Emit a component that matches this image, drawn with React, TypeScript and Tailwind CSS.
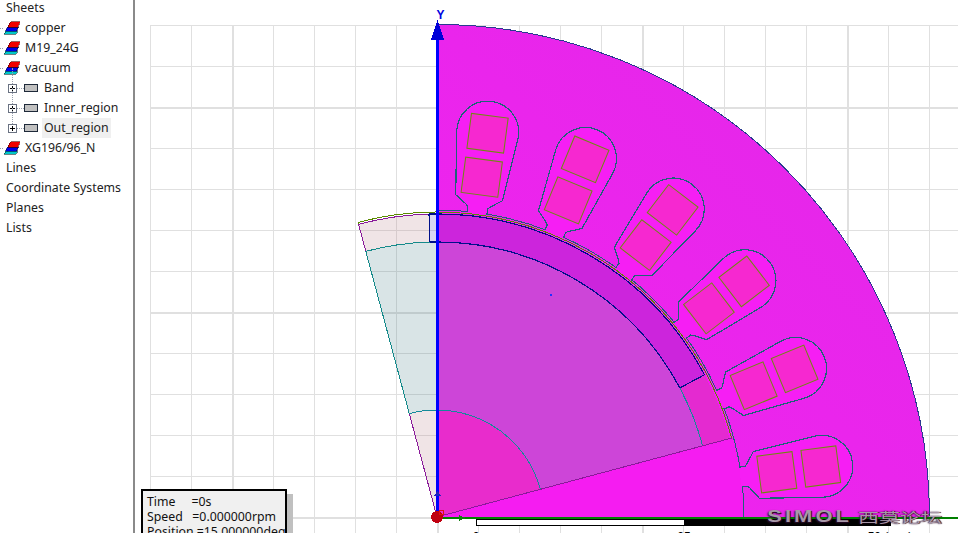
const CX = 437;
const CY = 517;

const pt = (r: number, deg: number) => {
  const a = (deg * Math.PI) / 180;
  return `${(CX + r * Math.cos(a)).toFixed(2)} ${(CY - r * Math.sin(a)).toFixed(2)}`;
};

// arc line from a1 to a2 (counter clockwise on screen)
const arc = (r: number, a1: number, a2: number) => `M${pt(r, a1)} A${r} ${r} 0 0 0 ${pt(r, a2)}`;

const ring = (r1: number, r2: number, a1: number, a2: number) =>
  `M${pt(r2, a1)} A${r2} ${r2} 0 0 0 ${pt(r2, a2)} L${pt(r1, a2)} A${r1} ${r1} 0 0 1 ${pt(r1, a1)} Z`;

const pie = (r: number, a1: number, a2: number) => `M${CX} ${CY} L${pt(r, a1)} A${r} ${r} 0 0 0 ${pt(r, a2)} Z`;

const u = (n: number) => CX + n;
const up = (n: number) => CY - n;

const slotPath = `M${u(306)} ${up(10)} L${u(312)} ${up(10)} L${u(314)} ${up(12)} L${u(322)} ${up(23.5)} L${u(384.6)} ${up(30.8)} A31 31 0 1 1 ${u(384.6)} ${up(-30.8)} L${u(322)} ${up(-23.5)} L${u(314)} ${up(-12)} L${u(312)} ${up(-10)} L${u(306)} ${up(-10)}`;

const slotAngles = [7.5, 22.5, 37.5, 52.5, 67.5, 82.5];

const gridX = Array.from({ length: 20 }, (_, i) => 150 + i * 41);
const gridY = Array.from({ length: 13 }, (_, i) => 25 + i * 41);

const MaterialIcon = () => (
  <svg width="16" height="14" viewBox="0 0 16 14" className="shrink-0" shapeRendering="crispEdges">
    <path d="M0 13 L1.5 9.5 L13.5 9.5 L12 13 Z" fill="#00c8c8" stroke="#0a3030" strokeWidth="0.6" />
    <path d="M1.5 10 L3.5 6 L14.5 6 L12.5 10 Z" fill="#0000e8" stroke="#000040" strokeWidth="0.6" />
    <path d="M3.5 6 L6.5 0.5 L16 0.5 L13.5 6 Z" fill="#f00000" stroke="#500000" strokeWidth="0.6" />
  </svg>
);

const materials = (name: string) => (
  <div className="flex h-5 items-center" key={name}>
    <span className="mr-px h-0 w-[3px] border-t border-dotted border-gray-400" />
    <MaterialIcon />
    <span className="ml-[5px]">{name}</span>
  </div>
);

const objectRow = (name: string, selected = false) => (
  <div className="relative flex h-5 items-center pl-2" key={name}>
    <span className="absolute -top-2.5 left-3 h-5 border-l border-dotted border-gray-400" />
    <span className="relative flex h-[9px] w-[9px] items-center justify-center border border-gray-500 bg-white">
      <span className="absolute h-px w-[5px] bg-black" />
      <span className="absolute h-[5px] w-px bg-black" />
    </span>
    <span className="h-0 w-[7px] border-t border-dotted border-gray-400" />
    <span className="h-2 w-[14px] border border-gray-800 bg-[#c0c0c0]" />
    <span className={`ml-1 px-0.5 leading-5 ${selected ? 'bg-[#f0f0f0]' : ''}`}>{name}</span>
  </div>
);

const plainRow = (name: string) => (
  <div className="flex h-5 items-center pl-1.5" key={name}>
    {name}
  </div>
);

const Sidebar = () => (
  <div className="-mt-0.5 flex h-full w-[133px] shrink-0 flex-col overflow-hidden bg-white font-['Noto_Sans',sans-serif] text-[12.3px] text-[#222]">
    {plainRow('Sheets')}
    {materials('copper')}
    {materials('M19_24G')}
    {materials('vacuum')}
    {objectRow('Band')}
    {objectRow('Inner_region')}
    {objectRow('Out_region', true)}
    {materials('XG196/96_N')}
    {plainRow('Lines')}
    {plainRow('Coordinate Systems')}
    {plainRow('Planes')}
    {plainRow('Lists')}
  </div>
);

const Drawing = () => (
  <svg width="823" height="533" viewBox="135 0 823 533" className="block" shapeRendering="crispEdges">
    <defs>
      <linearGradient id="stator" x1="0" y1="1" x2="1" y2="0">
        <stop offset="0" stopColor="#f222f0" />
        <stop offset="1" stopColor="#e228e8" />
      </linearGradient>
    </defs>

    {/* grid */}
    {gridX.map((x, i) => {
      const major = (i - 2) % 5 === 0;
      return <line key={x} x1={x + (major ? 1 : 0.5)} y1={25} x2={x + (major ? 1 : 0.5)} y2={533} stroke="#e0e0e0" strokeWidth={major ? 2 : 1} />;
    })}
    {gridY.map((y, i) => {
      const major = (i - 2) % 5 === 0;
      return <line key={y} x1={150} y1={y + (major ? 1 : 0.5)} x2={958} y2={y + (major ? 1 : 0.5)} stroke="#e0e0e0" strokeWidth={major ? 2 : 1} />;
    })}

    {/* stator */}
    <path d={ring(300, 492.5, 0, 90)} fill="url(#stator)" />
    <path d={arc(492.5, 0, 90)} fill="none" stroke="#2a3a90" />
    <path d={pie(307, 0, 15)} fill="#f51cf1" />
    <path d={ring(300, 307, 15, 90)} fill="#f51cf1" />
    <path d={arc(307, 0, 90)} fill="none" stroke="#1c6478" />

    {/* slots and coils */}
    {slotAngles.map((a) => (
      <g key={a} transform={`rotate(${-a} ${CX} ${CY})`}>
        <path d={slotPath} fill="#f61ef4" stroke="#1c6478" strokeWidth="1.2" />
        <rect x={u(325)} y={up(18.5)} width={35.5} height={37} fill="#f628d0" stroke="#6f8a10" shapeRendering="auto" />
        <rect x={u(369.5)} y={up(18.5)} width={35.2} height={37} fill="#f628d0" stroke="#6f8a10" shapeRendering="auto" />
      </g>
    ))}

    {/* rotor, right of the axis */}
    <path d={ring(275, 303, 15, 28)} fill="#e42ad0" />
    <path d={ring(275, 303, 28, 90)} fill="#cc25dc" />
    <path d={ring(107, 275, 15, 90)} fill="#cd45d8" />
    <path d={pie(107, 15, 90)} fill="#e82ccc" />

    {/* rotor, left of the axis */}
    <path d={ring(275, 303, 91.5, 105)} fill="rgb(180,120,130)" fillOpacity="0.2" />
    <path d={ring(275, 303, 90, 91.5)} fill="#3030c0" fillOpacity="0.2" />
    <path d={ring(107, 275, 90, 105)} fill="rgb(65,120,130)" fillOpacity="0.2" />
    <path d={pie(107, 90, 105)} fill="rgb(180,120,130)" fillOpacity="0.2" />

    {/* rotor outlines */}
    <path d={arc(305, 15, 105)} fill="none" stroke="#5a8a00" />
    <path d={arc(303, 91.5, 105)} fill="none" stroke="#8a1a9a" />
    <path d={arc(303, 28, 91.5)} fill="none" stroke="#00108a" strokeWidth="1.2" />
    <path d={arc(275, 28, 91.5)} fill="none" stroke="#00108a" strokeWidth="1.2" />
    <path d={arc(275, 15, 28)} fill="none" stroke="#158a9a" />
    <path d={arc(275, 91.5, 105)} fill="none" stroke="#158a8a" />
    <path d={arc(107, 15, 105)} fill="none" stroke="#158a9a" />
    <path d={`M${pt(275, 28)} L${pt(303, 28)}`} stroke="#00108a" strokeWidth="1.2" />
    <path d={`M${pt(275, 91.5)} L${pt(303, 91.5)}`} stroke="#00108a" strokeWidth="1.2" />
    <path d={`M${CX} ${CY} L${pt(305, 15)}`} stroke="#8a1a9a" />
    <path d={`M${CX} ${CY} L${pt(107, 105)}`} stroke="#8a1a9a" />
    <path d={`M${pt(107, 105)} L${pt(275, 105)}`} stroke="#158a8a" />
    <path d={`M${pt(275, 105)} L${pt(303, 105)}`} stroke="#8a1a9a" />
    <path d={`M${pt(303, 105)} L${pt(305, 105)}`} stroke="#5a8a00" />
    <rect x="550" y="294" width="1.5" height="1.5" fill="#2030ff" />

    {/* axes */}
    <line x1={CX + 0.5} y1={30} x2={CX + 0.5} y2={517} stroke="#0000ff" strokeWidth="3" />
    <path d="M437.5 20 L444 40 L431 40 Z" fill="#0000d8" />
    <path d="M437.5 491 L441 496 L434 496 Z" fill="#2020c0" />
    <line x1={437} y1={518} x2={958} y2={518} stroke="#008000" strokeWidth="2" />
    <path d="M459 515 L466 518 L459 521 Z" fill="#108010" />
    <text x="440.5" y="19" textAnchor="middle" fill="#0000e0" fontSize="12" fontWeight="700" fontFamily="Liberation Sans, sans-serif">
      Y
    </text>
    <circle cx="437" cy="517" r="6" fill="#c00010" />
    <rect x="439" y="510" width="4" height="4" fill="none" stroke="#e01010" />

    {/* scale bar */}
    <rect x="476.5" y="519.5" width="208" height="6" fill="#fff" stroke="#000" />
    <rect x="684" y="519" width="207" height="7" fill="#000" />
    <g fontFamily="Liberation Sans, sans-serif" fontSize="12" fill="#000" shapeRendering="auto">
      <text x="476" y="541" textAnchor="middle">0</text>
      <text x="684" y="541" textAnchor="middle">25</text>
      <text x="890" y="541" textAnchor="middle">50 (mm)</text>
    </g>
  </svg>
);

const StatusBox = () => (
  <div className="absolute bottom-[-6px] left-[6px] h-[50px] w-[146px]">
    <div className="absolute left-[146px] top-[5px] h-[45px] w-[6px] bg-[#c0c0c0]" />
    <div className="h-full w-full border-2 border-black bg-[#f0f0f0] pl-1 pt-[3px] font-['Noto_Sans',sans-serif] text-[12.3px] leading-[15px] whitespace-pre text-[#111]">
      <div>{'Time     =0s'}</div>
      <div>{'Speed   =0.000000rpm'}</div>
      <div>{'Position =15.000000deg'}</div>
    </div>
  </div>
);

const Watermark = () => (
  <div className="absolute right-[16px] top-[500px] flex items-center gap-1.5 text-[#a898a8] [text-shadow:1px_1px_1px_#20081f,-1px_1px_2px_#301030]">
    <span className="origin-right scale-y-[0.72] font-['Liberation_Sans',sans-serif] text-[22px] font-bold tracking-[3px]">SIMOL</span>
    <span className="origin-right scale-y-[0.62] font-['Noto_Sans_CJK_SC',sans-serif] text-[21px] leading-none">西莫论坛</span>
  </div>
);

export default function App() {
  return (
    <div className="flex h-[533px] w-[958px] overflow-hidden bg-white">
      <Sidebar />
      <div className="h-full w-[2px] shrink-0 bg-[#8a8a8a]" />
      <div className="relative flex-1 overflow-hidden">
        <Drawing />
        <StatusBox />
        <Watermark />
      </div>
    </div>
  );
}
